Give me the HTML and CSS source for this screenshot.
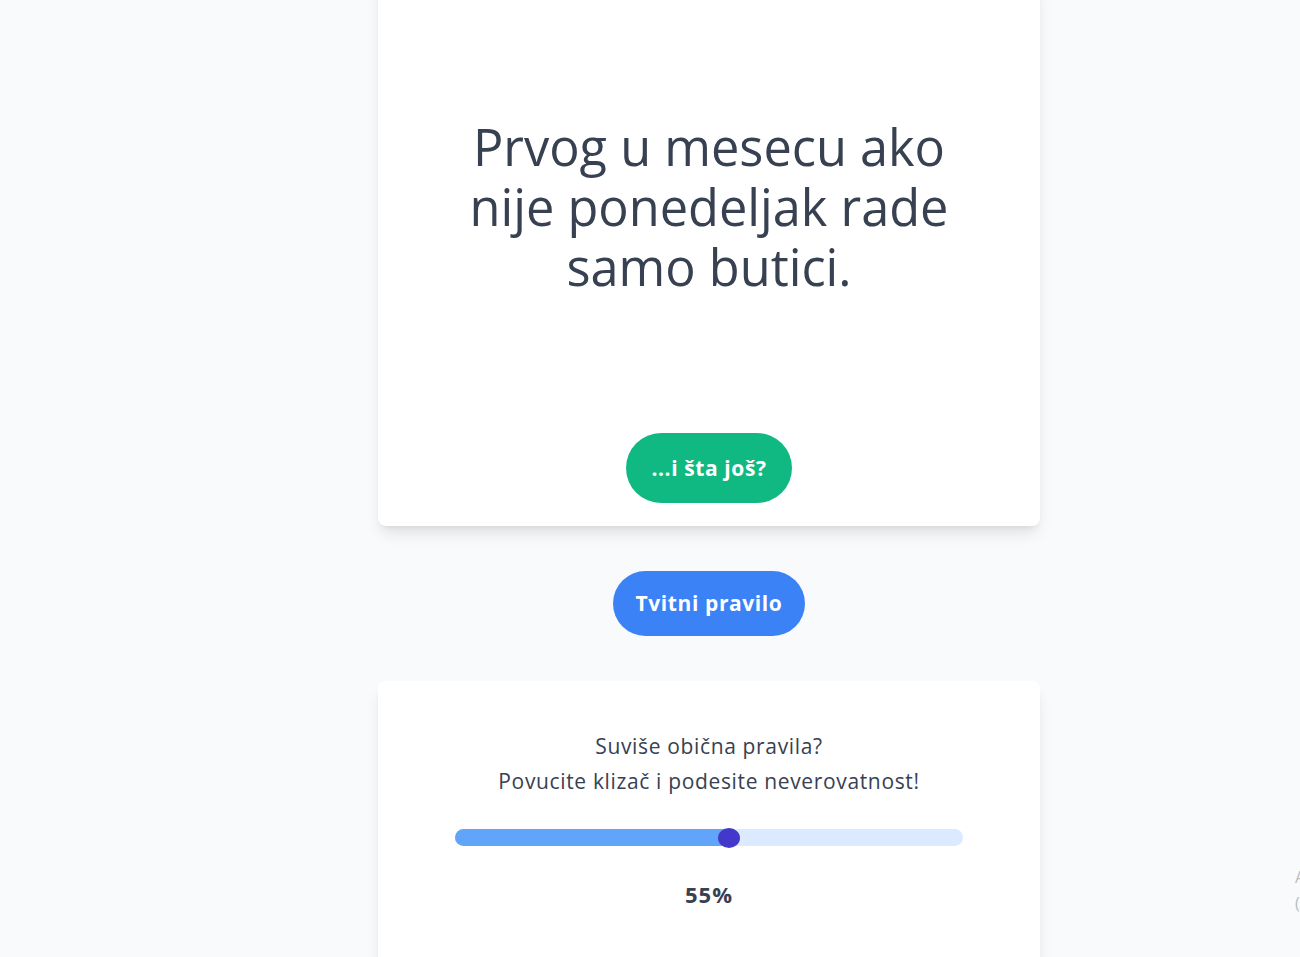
FILE: index.html
```html
<!DOCTYPE html>
<html lang="sr">
<head>
<meta charset="utf-8">
<title>Pravilo</title>
<link rel="stylesheet" href="styles.css">
</head>
<body>
<main class="page">
  <div class="column">
    <section class="card rule-card">
      <h1 class="rule-text">Prvog u mesecu ako nije ponedeljak rade samo butici.</h1>
      <button class="btn btn-green">...i šta još?</button>
    </section>
    <button class="btn btn-blue">Tvitni pravilo</button>
    <section class="card slider-card">
      <p class="slider-text">Suviše obična pravila?<br>Povucite klizač i podesite neverovatnost!</p>
      <div class="track">
        <div class="fill" style="width:54%"><span class="thumb"></span></div>
      </div>
      <div class="percent">55%</div>
    </section>
  </div>
</main>
<div class="edge-note">A<br>(</div>
</body>
</html>
```
FILE: styles.css
```css
* { box-sizing: border-box; }
html, body { margin: 0; padding: 0; }
body {
  background: #f9fafb;
  font-family: "Open Sans", "Noto Sans", sans-serif;
  color: #374151;
  overflow: hidden;
  height: 957px;
  position: relative;
}
.page {
  padding-left: 378px;
}
.column {
  width: 662px;
  display: flex;
  flex-direction: column;
  align-items: center;
}
.card {
  width: 100%;
  background: #fff;
  border-radius: 8px;
  box-shadow: 0 10px 15px -3px rgba(0,0,0,0.1), 0 4px 6px -4px rgba(0,0,0,0.1);
}
.rule-card {
  margin-top: -24px;
  padding: 141px 24px 23px;
  display: flex;
  flex-direction: column;
  align-items: center;
}
.rule-text {
  margin: 0;
  font-size: 50.5px;
  line-height: 60px;
  font-weight: 400;
  text-align: center;
  width: 520px;
  color: #374151;
}
.btn {
  border: none;
  font-family: inherit;
  font-weight: 700;
  font-size: 21px;
  letter-spacing: 0.6px;
  color: #fff;
  border-radius: 9999px;
  cursor: pointer;
}
.btn-green {
  margin-top: 136px;
  background: #10b981;
  padding: 21px 25px;
  line-height: 28px;
}
.btn-blue {
  margin-top: 45px;
  background: #3b82f6;
  padding: 18px 23px;
  line-height: 29px;
}
.slider-card {
  margin-top: 45px;
  padding: 48px 40px 60px;
  display: flex;
  flex-direction: column;
  align-items: center;
}
.slider-text {
  margin: 0;
  font-size: 21px;
  letter-spacing: 0.65px;
  line-height: 35px;
  text-align: center;
  color: #374151;
}
.track {
  margin-top: 30px;
  width: 508px;
  height: 17px;
  border-radius: 9px;
  background: #dbeafe;
}
.fill {
  height: 100%;
  background: #60a5fa;
  border-radius: 9px 0 0 9px;
  display: flex;
  justify-content: flex-end;
  align-items: center;
}
.thumb {
  flex: none;
  width: 22px;
  height: 20px;
  border-radius: 50%;
  background: #4338ca;
  margin-right: -11px;
}
.percent {
  margin-top: 34px;
  font-size: 22px;
  letter-spacing: 1px;
  line-height: 28px;
  font-weight: 700;
}
.edge-note {
  position: absolute;
  left: 1295px;
  top: 864px;
  font-size: 16px;
  line-height: 26px;
  color: #b8bcc4;
}
```
